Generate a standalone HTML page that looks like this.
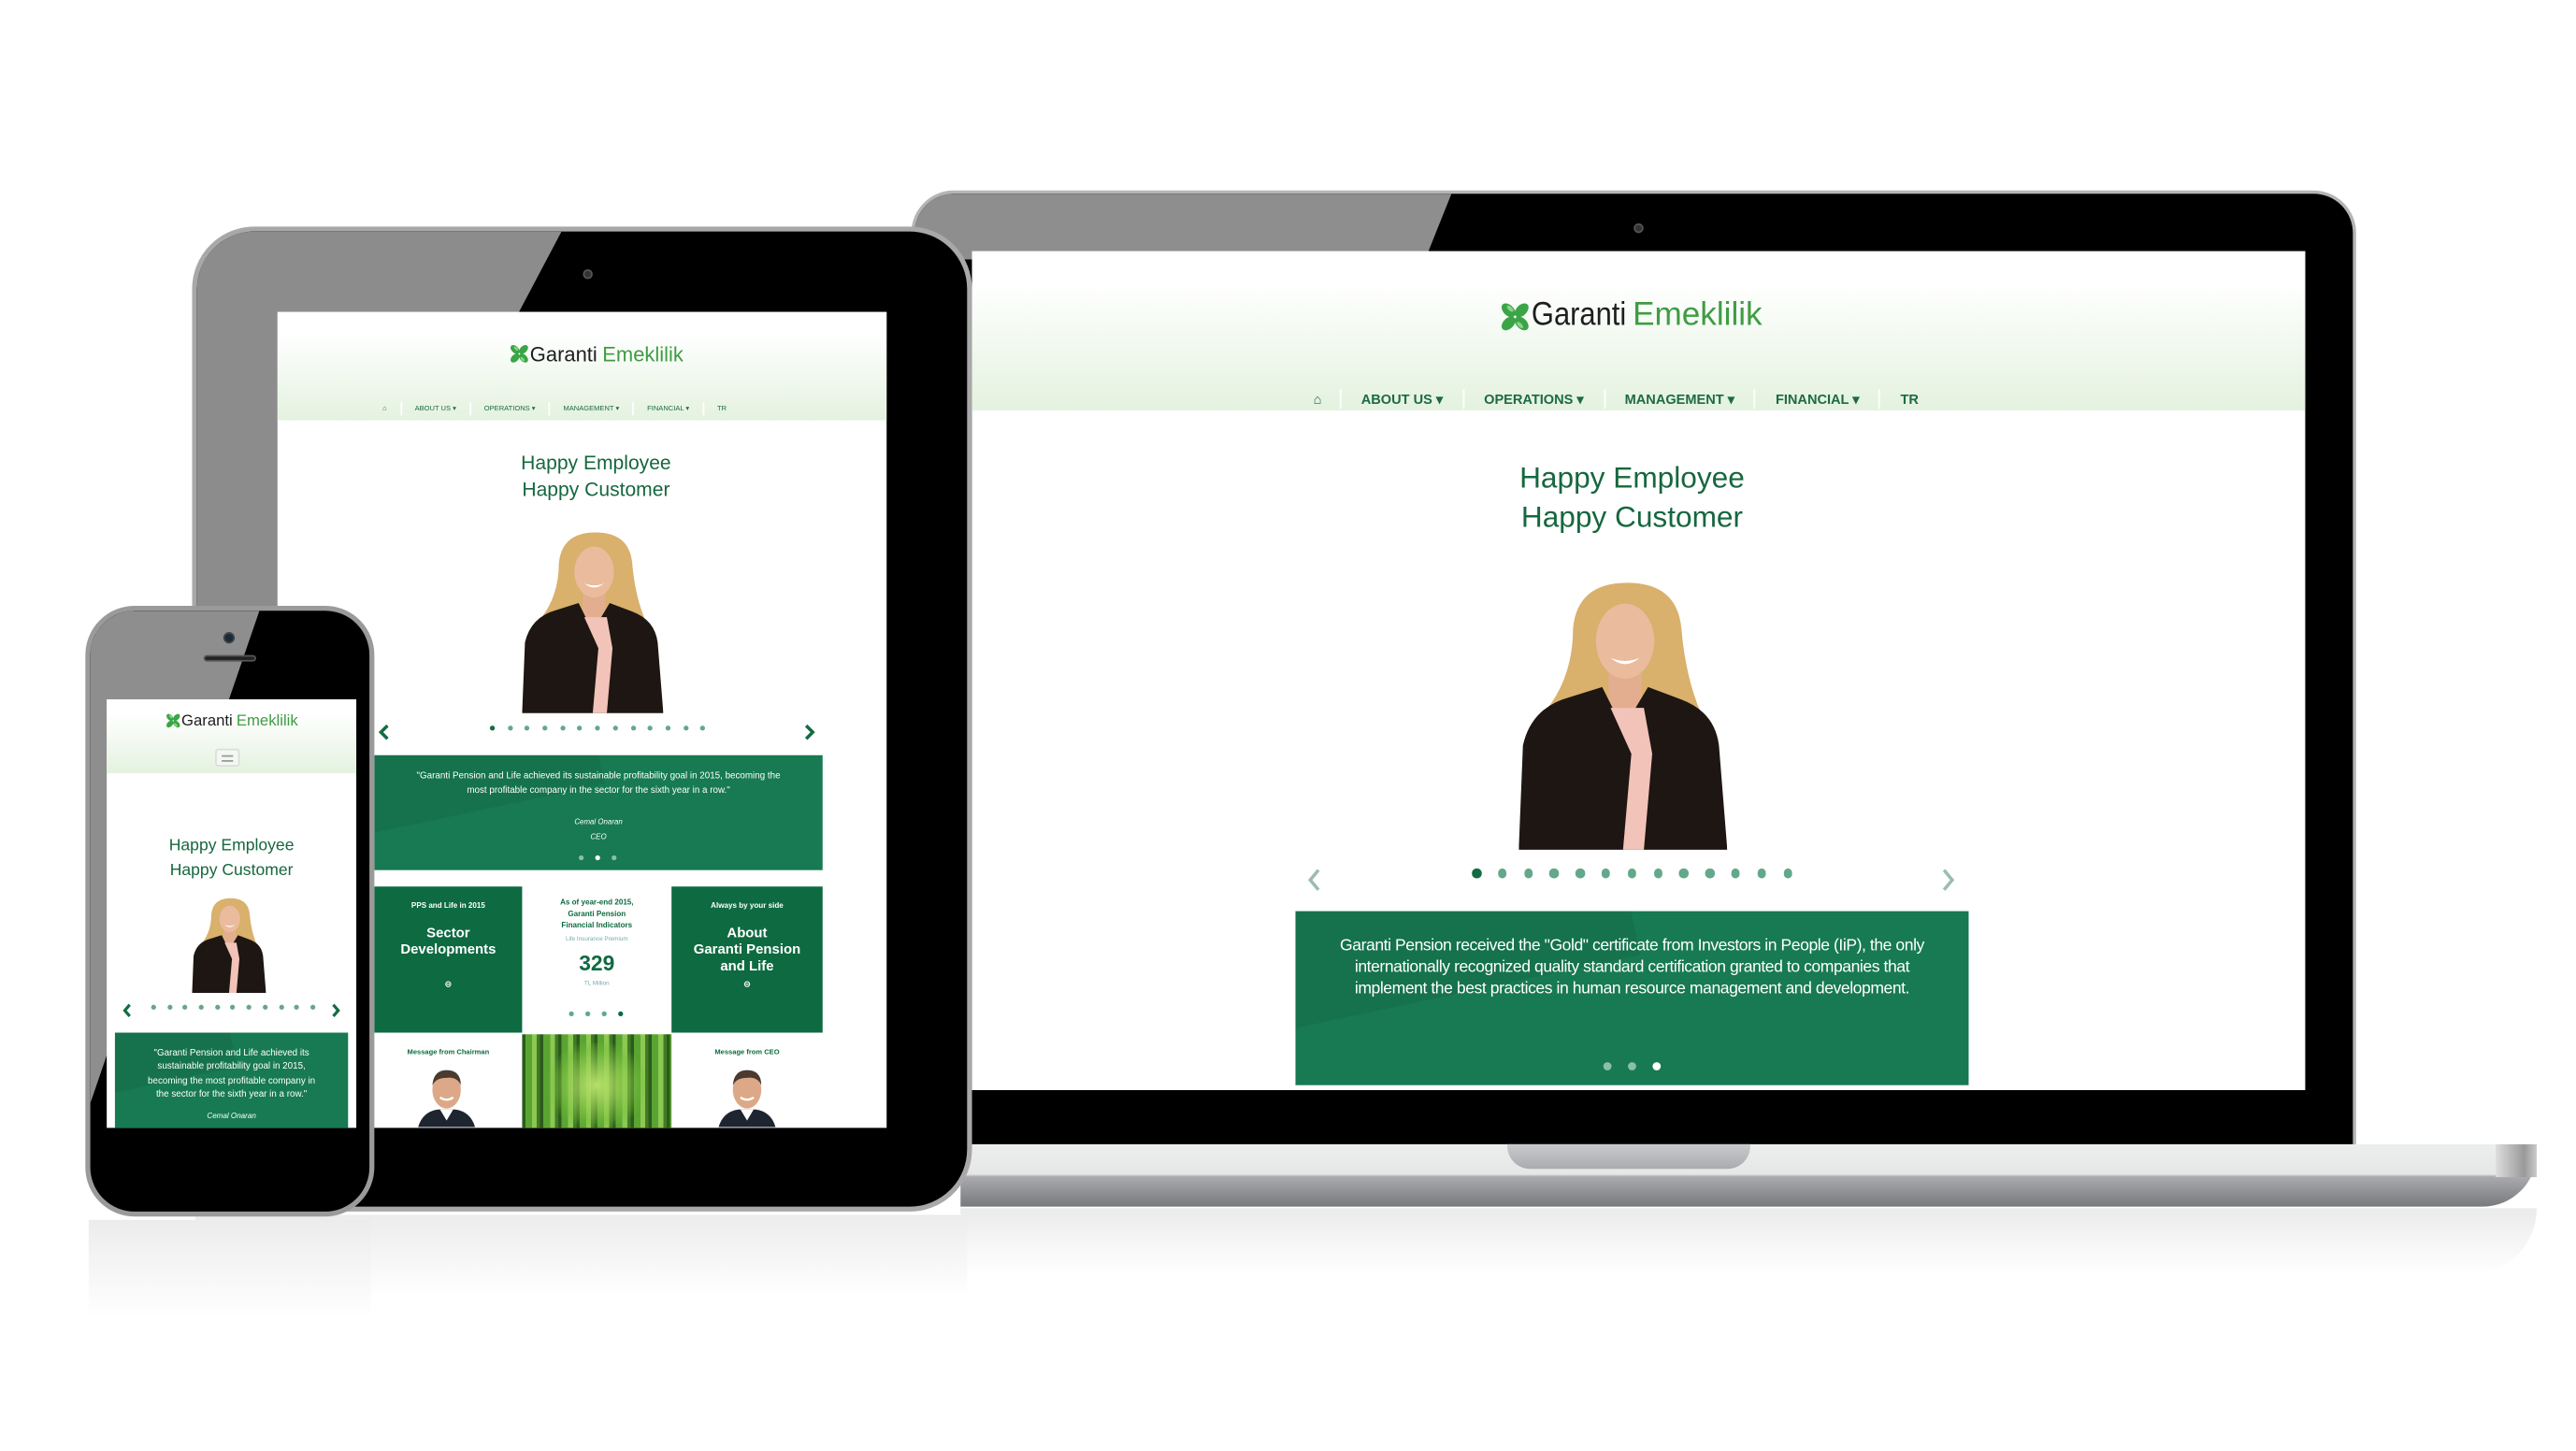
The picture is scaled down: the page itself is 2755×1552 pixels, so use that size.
<!DOCTYPE html>
<html><head><meta charset="utf-8">
<style>
*{margin:0;padding:0;box-sizing:border-box}
html,body{width:2755px;height:1550px;overflow:hidden;background:#fff;font-family:"Liberation Sans",sans-serif}
#c{position:absolute;left:0;top:0;width:1570px;height:884px;transform:scale(1.756);transform-origin:0 0}
.abs{position:absolute}
.scr{position:absolute;overflow:hidden;background:#fff}
.hdr{position:absolute;left:0;top:0;width:100%;background:linear-gradient(#fff 20%,#e4f2df)}
.logo{position:absolute;white-space:nowrap;transform:translateX(-50%);display:flex;align-items:center}
.logo b{color:#1e1e1e;font-weight:normal}
.logo i{color:#3f9c43;font-style:normal;margin-left:.25em}
.nav{position:absolute;display:flex;color:#1d6a43;font-weight:bold;white-space:nowrap}
.nav span{border-right:1px solid #fff}
.nav span:last-child{border:none}
.h{color:#16673e;position:absolute;text-align:center;transform:translateX(-50%);white-space:nowrap;line-height:1.32}
.dots{position:absolute;display:flex;transform:translateX(-50%)}
.dots i{display:block;border-radius:50%;background:#64a88a}
.gbox{position:absolute;background:#177a52;overflow:hidden;color:#fff;text-align:center}
.gbox:before{content:"";position:absolute;left:-10%;top:-20%;width:60%;height:70%;background:rgba(0,0,0,.06);transform:rotate(-12deg)}
.tile{position:absolute;text-align:center;font-weight:bold}
</style></head><body>
<svg width="0" height="0" style="position:absolute">
<defs>
<symbol id="w" viewBox="0 0 100 130">
<path d="M26 24 Q28 2 52 2 Q76 2 78 24 Q80 48 88 66 Q74 74 62 64 L40 64 Q22 72 14 62 Q26 46 26 24Z" fill="#d9b06c"/>
<rect x="43" y="40" width="16" height="22" fill="#e3ae90"/>
<ellipse cx="51" cy="30" rx="14" ry="18" fill="#ebbb9d"/>
<path d="M44 38 Q51 44 58 38 Q51 41 44 38Z" fill="#fff"/>
<path d="M0 130 L2 80 Q6 62 24 57 L40 52 L50 72 L62 52 L78 58 Q94 64 96 80 L100 130Z" fill="#1d1613"/>
<path d="M44 62 L60 62 L64 84 L60 130 L50 130 L54 84Z" fill="#f2c3b8"/>
</symbol>
<symbol id="m" viewBox="0 0 60 60">
<path d="M4 60 Q8 46 22 44 L38 44 Q52 46 56 60Z" fill="#1e2430"/>
<path d="M24 44 L30 54 L36 44Z" fill="#fff"/>
<ellipse cx="30" cy="26" rx="13" ry="17" fill="#dca887"/>
<path d="M17 22 Q18 8 30 8 Q43 8 43 22 Q40 14 30 15 Q20 15 17 22Z" fill="#4a3a30"/>
<path d="M24 33 Q30 37 36 33" stroke="#fff" stroke-width="2" fill="none"/>
</symbol>
<symbol id="cl" viewBox="0 0 20 20">
<g fill="#3aa546"><ellipse cx="6" cy="6" rx="3.2" ry="5" transform="rotate(-45 6 6)"/><ellipse cx="14" cy="6" rx="3.2" ry="5" transform="rotate(45 14 6)"/><ellipse cx="6" cy="14" rx="3.2" ry="5" transform="rotate(45 6 14)"/><ellipse cx="14" cy="14" rx="3.2" ry="5" transform="rotate(-45 14 14)"/></g>
<g fill="#8fd08a"><ellipse cx="7" cy="5" rx="1.2" ry="2.5" transform="rotate(-45 7 5)"/><ellipse cx="13" cy="15" rx="1.2" ry="2.5" transform="rotate(-45 13 15)"/></g>
</symbol>
</defs></svg>
<div id="c">

<div class="abs" style="left:585px;top:736px;width:960px;height:40px;background:linear-gradient(#e6e6e6,#fff);border-radius:0 0 40px 0;opacity:.8"></div>
<div class="abs" style="left:119px;top:740px;width:470px;height:50px;background:linear-gradient(#ececec,#fff)"></div>
<div class="abs" style="left:54px;top:743px;width:172px;height:60px;background:linear-gradient(#ececec,#fff)"></div>

<!-- LAPTOP -->
<div class="abs" style="left:555px;top:116px;width:880px;height:584px;background:#000;border:2px solid #b5b5b5;border-radius:26px 26px 0 0;overflow:hidden">
  <div class="abs" style="left:0;top:0;width:880px;height:40px;background:#8e8e8e;clip-path:polygon(0 0,327px 0,311px 40px,0 40px)"></div>
  <div class="abs" style="left:438px;top:18px;width:6px;height:6px;border-radius:50%;background:#333;border:1px solid #555"></div>
</div>
<div class="abs" style="left:585px;top:697px;width:960px;height:38px;background:linear-gradient(#eceeee 0,#e6e6e6 48%,#a9abae 52%,#77797c 100%);border-radius:0 6px 40px 0"></div>
<div class="abs" style="left:1520px;top:697px;width:25px;height:20px;background:linear-gradient(90deg,#ddd,#999 70%,#ccc)"></div>
<div class="abs" style="left:918px;top:697px;width:148px;height:15px;background:linear-gradient(#c9cacc,#a9abae);border-radius:0 0 14px 14px"></div>

<div class="scr" style="left:592px;top:153px;width:812px;height:511px">
  <div class="hdr" style="height:97px"></div>
  <div class="logo" style="left:401px;top:28px;font-size:20px"><svg width="20" height="22" viewBox="0 0 20 20"><use href="#cl"/></svg><b style="transform:scaleX(.88);display:inline-block;transform-origin:left">Garanti</b><i style="margin-left:-4px">Emeklilik</i></div>
  <div class="nav" style="left:200px;top:84px;font-size:8.3px;height:12px;line-height:12px">
    <span style="padding:0 11px 0 8px">&#8962;</span><span style="padding:0 12px">ABOUT US &#9662;</span><span style="padding:0 12px">OPERATIONS &#9662;</span><span style="padding:0 12px">MANAGEMENT &#9662;</span><span style="padding:0 12px">FINANCIAL &#9662;</span><span style="padding:0 12px">TR</span>
  </div>
  <div class="h" style="left:402px;top:126px;font-size:18px;line-height:24px">Happy Employee<br>Happy Customer</div>
  <svg class="abs" style="left:333px;top:199px" width="127" height="166"><use href="#w"/></svg>
  <div class="dots" style="left:402px;top:376px;gap:10.3px"><i style="width:5.5px;height:5.5px;background:#156b43"></i><i style="width:5.5px;height:5.5px"></i><i style="width:5.5px;height:5.5px"></i><i style="width:5.5px;height:5.5px"></i><i style="width:5.5px;height:5.5px"></i><i style="width:5.5px;height:5.5px"></i><i style="width:5.5px;height:5.5px"></i><i style="width:5.5px;height:5.5px"></i><i style="width:5.5px;height:5.5px"></i><i style="width:5.5px;height:5.5px"></i><i style="width:5.5px;height:5.5px"></i><i style="width:5.5px;height:5.5px"></i><i style="width:5.5px;height:5.5px"></i></div>
  <svg class="abs" style="left:203px;top:376px" width="10" height="14"><path d="M8 1 L3 7 L8 13" stroke="#9cbdae" stroke-width="2" fill="none"/></svg>
  <svg class="abs" style="left:590px;top:376px" width="10" height="14"><path d="M2 1 L7 7 L2 13" stroke="#9cbdae" stroke-width="2" fill="none"/></svg>
  <div class="gbox" style="left:197px;top:402px;width:410px;height:106px;font-size:10px;line-height:13px">
    <div style="position:relative;margin-top:15px;letter-spacing:-.25px">Garanti Pension received the "Gold" certificate from Investors in People (IiP), the only<br>internationally recognized quality standard certification granted to companies that<br>implement the best practices in human resource management and development.</div>
    <div class="dots" style="left:205px;top:92px;gap:10px"><i style="width:5px;height:5px;background:#8cbfa7"></i><i style="width:5px;height:5px;background:#8cbfa7"></i><i style="width:5px;height:5px;background:#fff"></i></div>
  </div>
</div>

<!-- TABLET -->
<div class="abs" style="left:117px;top:138px;width:475px;height:600px;background:#000;border:3px solid #a8a8a8;border-radius:38px;overflow:hidden">
  <div class="abs" style="left:0;top:0;width:475px;height:600px;background:#8c8c8c;clip-path:polygon(0 0,222px 0,0 420px)"></div>
  <div class="abs" style="left:235px;top:23px;width:6px;height:6px;border-radius:50%;background:#333;border:1px solid #555"></div>
</div>
<div class="scr" style="left:169px;top:190px;width:371px;height:497px">
  <div class="hdr" style="height:66px"></div>
  <div class="logo" style="left:194px;top:18px;font-size:12.5px"><svg width="13" height="15" viewBox="0 0 20 20"><use href="#cl"/></svg><b>Garanti</b><i>Emeklilik</i></div>
  <div class="nav" style="left:58px;top:55px;font-size:4.3px;font-weight:normal;height:8px;line-height:8px">
    <span style="padding:0 8px 0 6px">&#8962;</span><span style="padding:0 8px">ABOUT US &#9662;</span><span style="padding:0 8px">OPERATIONS &#9662;</span><span style="padding:0 8px">MANAGEMENT &#9662;</span><span style="padding:0 8px">FINANCIAL &#9662;</span><span style="padding:0 8px">TR</span>
  </div>
  <div class="h" style="left:194px;top:84px;font-size:12px;line-height:16px">Happy Employee<br>Happy Customer</div>
  <svg class="abs" style="left:149px;top:132px" width="86" height="113"><use href="#w"/></svg>
  <div class="dots" style="left:195px;top:252px;gap:7.7px"><i style="width:3px;height:3px;background:#156b43"></i><i style="width:3px;height:3px"></i><i style="width:3px;height:3px"></i><i style="width:3px;height:3px"></i><i style="width:3px;height:3px"></i><i style="width:3px;height:3px"></i><i style="width:3px;height:3px"></i><i style="width:3px;height:3px"></i><i style="width:3px;height:3px"></i><i style="width:3px;height:3px"></i><i style="width:3px;height:3px"></i><i style="width:3px;height:3px"></i><i style="width:3px;height:3px"></i></div>
  <svg class="abs" style="left:61px;top:251px" width="8" height="10"><path d="M6 1 L2 5 L6 9" stroke="#156b43" stroke-width="2" fill="none"/></svg>
  <svg class="abs" style="left:320px;top:251px" width="8" height="10"><path d="M2 1 L6 5 L2 9" stroke="#156b43" stroke-width="2" fill="none"/></svg>
  <div class="gbox" style="left:59px;top:270px;width:273px;height:70px;font-size:5.6px;line-height:9px">
    <div style="position:relative;margin-top:9px">"Garanti Pension and Life achieved its sustainable profitability goal in 2015, becoming the<br>most profitable company in the sector for the sixth year in a row."</div>
    <div style="position:relative;margin-top:9px;font-style:italic;font-size:4.5px;line-height:9px">Cemal Onaran<br>CEO</div>
    <div class="dots" style="left:136px;top:61px;gap:7px"><i style="width:3px;height:3px;background:#8cbfa7"></i><i style="width:3px;height:3px;background:#fff"></i><i style="width:3px;height:3px;background:#8cbfa7"></i></div>
  </div>
  <div class="tile" style="left:59px;top:350px;width:90px;height:89px;background:#0e6a40;color:#fff">
    <div style="font-size:4.6px;margin-top:9px">PPS and Life in 2015</div>
    <div style="font-size:8.5px;line-height:10px;margin-top:9px">Sector<br>Developments</div>
    <div style="font-size:5px;margin-top:14px">&#8861;</div>
  </div>
  <div class="tile" style="left:149px;top:350px;width:91px;height:89px;color:#0e6a40">
    <div style="font-size:4.6px;line-height:7px;margin-top:6px">As of year-end 2015,<br>Garanti Pension<br>Financial Indicators</div>
    <div style="font-size:3.6px;font-weight:normal;color:#7aa;margin-top:3px">Life Insurance Premium</div>
    <div style="font-size:13px;margin-top:5px">329</div>
    <div style="font-size:3.6px;font-weight:normal;color:#7aa;margin-top:3px">TL Million</div>
    <div class="dots" style="left:45px;top:76px;gap:7px"><i style="width:3px;height:3px"></i><i style="width:3px;height:3px"></i><i style="width:3px;height:3px"></i><i style="width:3px;height:3px;background:#0e6a40"></i></div>
  </div>
  <div class="tile" style="left:240px;top:350px;width:92px;height:89px;background:#0e6a40;color:#fff">
    <div style="font-size:4.6px;margin-top:9px">Always by your side</div>
    <div style="font-size:8.5px;line-height:10px;margin-top:9px">About<br>Garanti Pension<br>and Life</div>
    <div style="font-size:5px;margin-top:4px">&#8861;</div>
  </div>
  <div class="tile" style="left:59px;top:440px;width:90px;height:57px;color:#0e6a40">
    <div style="font-size:4.3px;margin-top:8px">Message from Chairman</div>
    <svg class="abs" style="left:24px;top:16px" width="40" height="41"><use href="#m"/></svg>
  </div>
  <div class="abs" style="left:149px;top:440px;width:91px;height:57px;background:repeating-linear-gradient(90deg,#2d5a1c 0 2px,#5aa532 2px 6px,#8cc852 6px 9px,#3f7c24 9px 11px)"></div>
  <div class="abs" style="left:165px;top:445px;width:59px;height:52px;background:radial-gradient(ellipse at 50% 50%,#b6e06a,rgba(120,190,60,.4) 60%,transparent 75%)"></div>
  <div class="tile" style="left:240px;top:440px;width:92px;height:57px;color:#0e6a40">
    <div style="font-size:4.3px;margin-top:8px">Message from CEO</div>
    <svg class="abs" style="left:26px;top:16px" width="40" height="41"><use href="#m"/></svg>
  </div>
</div>

<!-- PHONE -->
<div class="abs" style="left:52px;top:369px;width:176px;height:372px;background:#000;border:3px solid #9a9a9a;border-radius:30px;overflow:hidden">
  <div class="abs" style="left:0;top:0;width:176px;height:372px;background:#8e8e8e;clip-path:polygon(0 0,103px 0,0 300px)"></div>
  <div class="abs" style="left:81px;top:13px;width:7px;height:7px;border-radius:50%;background:#1b2a3a;border:1px solid #444"></div>
  <div class="abs" style="left:69px;top:27px;width:32px;height:4px;border-radius:2px;background:#222;border:1px solid #555"></div>
</div>
<div class="scr" style="left:65px;top:426px;width:152px;height:261px">
  <div class="hdr" style="height:45px"></div>
  <div class="logo" style="left:76px;top:7px;font-size:9.5px"><svg width="10" height="12" viewBox="0 0 20 20"><use href="#cl"/></svg><b>Garanti</b><i>Emeklilik</i></div>
  <div class="abs" style="left:66px;top:30px;width:15px;height:11px;border:1px solid #ddd;border-radius:2px;background:#f4f8f2"><div style="margin:3px 3px;height:4px;border-top:1px solid #999;border-bottom:1px solid #999"></div></div>
  <div class="h" style="left:76px;top:82px;font-size:10px;line-height:15px">Happy Employee<br>Happy Customer</div>
  <svg class="abs" style="left:52px;top:120px" width="45" height="59"><use href="#w"/></svg>
  <div class="dots" style="left:77px;top:186px;gap:6.7px"><i style="width:3px;height:3px"></i><i style="width:3px;height:3px"></i><i style="width:3px;height:3px"></i><i style="width:3px;height:3px"></i><i style="width:3px;height:3px"></i><i style="width:3px;height:3px"></i><i style="width:3px;height:3px"></i><i style="width:3px;height:3px"></i><i style="width:3px;height:3px"></i><i style="width:3px;height:3px"></i><i style="width:3px;height:3px"></i></div>
  <svg class="abs" style="left:9px;top:185px" width="7" height="9"><path d="M5 1 L2 4.5 L5 8" stroke="#156b43" stroke-width="1.8" fill="none"/></svg>
  <svg class="abs" style="left:136px;top:185px" width="7" height="9"><path d="M2 1 L5 4.5 L2 8" stroke="#156b43" stroke-width="1.8" fill="none"/></svg>
  <div class="gbox" style="left:5px;top:203px;width:142px;height:60px;font-size:5.6px;line-height:8.3px">
    <div style="position:relative;margin-top:9px">"Garanti Pension and Life achieved its<br>sustainable profitability goal in 2015,<br>becoming the most profitable company in<br>the sector for the sixth year in a row."</div>
    <div style="position:relative;margin-top:5px;font-style:italic;font-size:4.6px">Cemal Onaran</div>
  </div>
</div>

</div>
</body></html>
